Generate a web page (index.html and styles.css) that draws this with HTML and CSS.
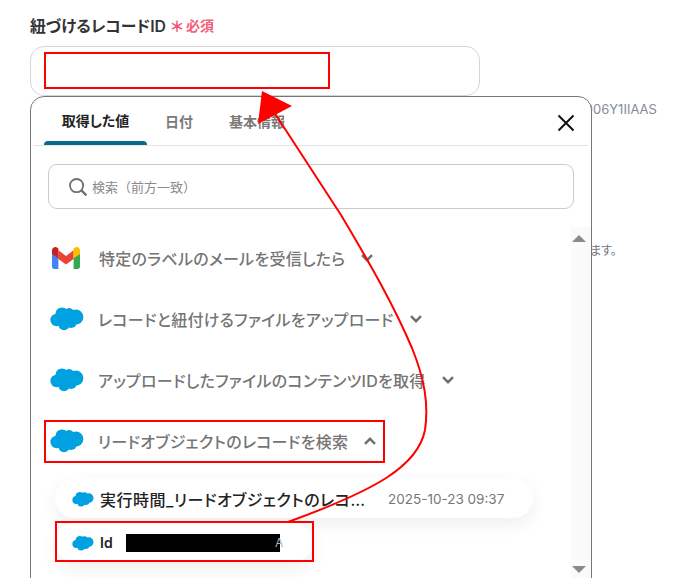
FILE: index.html
```html
<!DOCTYPE html>
<html lang="ja">
<head>
<meta charset="utf-8">
<title>紐づけるレコードID</title>
<link rel="stylesheet" href="styles.css">
</head>
<body>
<svg class="defs" width="0" height="0" aria-hidden="true">
  <symbol id="sf" viewBox="0 0 34 25">
    <g fill="#00a1e0">
      <circle cx="12" cy="8" r="6.6"/>
      <circle cx="19" cy="7.6" r="5.6"/>
      <circle cx="26" cy="11" r="7.4"/>
      <circle cx="6.6" cy="14" r="6.2"/>
      <circle cx="14" cy="18.6" r="5.6"/>
      <circle cx="21" cy="16" r="6"/>
      <rect x="8" y="8" width="18" height="10"/>
    </g>
  </symbol>
  <symbol id="down" viewBox="0 0 14 10">
    <path d="M2 2.2 7 7.2 12 2.2" fill="none" stroke="#6f6f6f" stroke-width="2.4"/>
  </symbol>
  <symbol id="up" viewBox="0 0 14 10">
    <path d="M2 7.8 7 2.8 12 7.8" fill="none" stroke="#6f6f6f" stroke-width="2.4"/>
  </symbol>
</svg>

<main class="form">
  <div class="label-row">
    <span class="label">紐づけるレコードID</span>
    <span class="asterisk">＊</span>
    <span class="required">必須</span>
  </div>
  <div class="input"></div>
  <p class="hint hint-id">0016F00006Y1IIAAS</p>
  <p class="hint hint-note">ます。</p>
</main>

<section class="panel">
  <header class="tabs">
    <span class="tab tab-active">取得した値</span>
    <span class="tab tab-date">日付</span>
    <span class="tab tab-basic">基本情報</span>
    <svg class="close" width="18" height="18" viewBox="0 0 18 18"><path d="M1.5 1.5 16.5 16.5M16.5 1.5 1.5 16.5" stroke="#111" stroke-width="2" fill="none"/></svg>
  </header>
  <div class="search">
    <svg width="20" height="20" viewBox="0 0 20 20"><circle cx="8.6" cy="8.6" r="6.6" fill="none" stroke="#6f6f6f" stroke-width="1.8"/><path d="M13.4 13.4 18.4 18.4" stroke="#6f6f6f" stroke-width="2.2"/></svg>
    <span>検索（前方一致）</span>
  </div>
  <div class="list-wrap">
    <div class="list">
      <div class="row">
        <svg class="icon-gmail" width="28" height="22" viewBox="0 0 28 22">
          <path d="M0 5.5V19.6C0 20.9 1 22 2.2 22H6.4V10.8Z" fill="#4285f4"/>
          <path d="M28 5.5V19.6C28 20.9 27 22 25.8 22H21.6V10.8Z" fill="#34a853"/>
          <path d="M6.4 12V3.2L14 9 21.6 3.2V12L14 17.6Z" fill="#ea4335"/>
          <path d="M0 3.4C0 .6 3.2-1 5.4.7L6.4 1.4V11.6L0 6.9Z" fill="#c5221f"/>
          <path d="M28 3.4C28 .6 24.8-1 22.6.7L21.6 1.4V11.6L28 6.9Z" fill="#fbbc04"/>
        </svg>
        <span class="row-text">特定のラベルのメールを受信したら</span>
        <svg class="chev" width="14" height="10"><use href="#down"/></svg>
      </div>
      <div class="row">
        <svg class="icon-sf" width="34" height="25"><use href="#sf"/></svg>
        <span class="row-text">レコードと紐付けるファイルをアップロード</span>
        <svg class="chev" width="14" height="10"><use href="#down"/></svg>
      </div>
      <div class="row">
        <svg class="icon-sf" width="34" height="25"><use href="#sf"/></svg>
        <span class="row-text">アップロードしたファイルのコンテンツIDを取得</span>
        <svg class="chev" width="14" height="10"><use href="#down"/></svg>
      </div>
      <div class="row">
        <svg class="icon-sf" width="34" height="25"><use href="#sf"/></svg>
        <span class="row-text">リードオブジェクトのレコードを検索</span>
        <svg class="chev" width="14" height="10"><use href="#up"/></svg>
      </div>
      <div class="pills">
        <div class="pill pill-wide">
          <svg width="22" height="16"><use href="#sf"/></svg>
          <span class="pill-name">実行時間_リードオブジェクトのレコード</span>
          <span class="pill-date">2025-10-23 09:37</span>
        </div>
        <div class="pill pill-narrow">
          <svg width="22" height="16"><use href="#sf"/></svg>
          <span class="pill-id">Id</span>
          <span class="redaction"></span>
          <span class="pill-tail">A</span>
        </div>
      </div>
    </div>
    <div class="scrollbar">
      <span class="arrow arrow-up"></span>
      <span class="arrow arrow-down"></span>
    </div>
  </div>
</section>

<div class="mark mark-input"></div>
<div class="mark mark-row"></div>
<div class="mark mark-id"></div>
<svg class="annotation" width="682" height="578" viewBox="0 0 682 578" aria-hidden="true">
  <path d="M274 112 L341 215 C372 267 394 306 412 348 C424 378 429 403 425 430 C418 466 376 490 288 522" fill="none" stroke="#f00" stroke-width="2"/>
  <path d="M262 91 L292 106 L258 124Z" fill="#f00"/>
</svg>
</body>
</html>
```

FILE: styles.css
```css
* { box-sizing: border-box; }

html, body {
  margin: 0;
  height: 578px;
  overflow: hidden;
  background: #fff;
  font-family: Inter, "Noto Sans CJK JP", sans-serif;
  font-feature-settings: "palt";
}

body { position: relative; }

.defs { position: absolute; }

.form { padding: 15px 0 0 30px; }

.label-row {
  display: flex;
  align-items: center;
  height: 20px;
}

.label {
  font-size: 15.8px;
  font-weight: 600;
  color: #333;
}

.asterisk {
  margin-left: 3px;
  width: 16px;
  font-size: 15px;
  font-weight: 600;
  color: #f4516c;
  text-align: center;
}

.required {
  margin-left: 1px;
  font-size: 14px;
  font-weight: 600;
  color: #f4617a;
}

.input {
  width: 450px;
  height: 50px;
  margin-top: 11px;
  border: 1px solid #d2d6dc;
  border-radius: 14px;
}

.hint {
  margin: 0;
  font-size: 13px;
  line-height: 18px;
  color: #858b96;
  white-space: nowrap;
}

.hint-id {
  margin-top: 4px;
  padding-left: 501px;
}

.hint-note {
  margin-top: 124px;
  padding-left: 560px;
  color: #6f757f;
  font-size: 12px;
}

.panel {
  position: absolute;
  left: 30px;
  top: 96px;
  width: 562px;
  height: 500px;
  display: flex;
  flex-direction: column;
  background: #fff;
  border: 1px solid #777;
  border-radius: 14px;
}

.tabs {
  display: flex;
  align-items: center;
  height: 49px;
  margin: 0 3px 0 3px;
  border-bottom: 1px solid #e4e4e4;
}

.tab {
  font-size: 14px;
  font-weight: 600;
  color: #7a7a7a;
  white-space: nowrap;
}

.tab-active {
  position: relative;
  display: flex;
  align-items: center;
  justify-content: center;
  width: 103px;
  height: 48px;
  margin-left: 10px;
  padding-bottom: 2px;
  color: #222;
}

.tab-active::after {
  content: "";
  position: absolute;
  left: 0;
  right: 0;
  bottom: 0;
  height: 4px;
  background: #0b6a85;
  border-radius: 4px 4px 0 0;
}

.tab-date { margin-left: 18px; }
.tab-basic { margin-left: 36px; }

.close {
  margin-left: auto;
  margin-right: 13px;
  margin-top: 3px;
}

.search {
  display: flex;
  align-items: center;
  gap: 4px;
  width: 526px;
  height: 45px;
  margin: 18px 0 0 17px;
  padding-left: 19px;
  border: 1px solid #ccc;
  border-radius: 9px;
  font-size: 13px;
  font-feature-settings: normal;
  color: #8a8a8a;
}

.list-wrap {
  display: flex;
  flex: 1;
  min-height: 0;
  margin-top: 18px;
}

.list {
  flex: 1;
  min-width: 0;
}

.row {
  display: flex;
  align-items: center;
  height: 61px;
  padding-left: 19px;
}

.icon-gmail { margin: 0 19px 0 2px; }
.icon-sf { margin-right: 14px; }

.row-text {
  font-size: 16px;
  letter-spacing: 0.27px;
  font-weight: 500;
  color: #757575;
  white-space: nowrap;
}

.chev { margin-left: 15px; }

.pills {
  display: flex;
  flex-direction: column;
  gap: 5px;
  padding: 8px 0 0 24px;
}

.pill {
  display: flex;
  align-items: center;
  height: 39px;
  padding-left: 17px;
  background: #fff;
  border-radius: 20px;
  box-shadow: 0 6px 18px rgba(0, 0, 0, 0.07);
}

.pill-wide { width: 478px; }
.pill-narrow { width: 258px; }

.pill-name {
  width: 273px;
  margin-left: 6px;
  overflow: hidden;
  white-space: nowrap;
  text-overflow: ellipsis;
  font-size: 16px;
  letter-spacing: 0.5px;
  font-weight: 500;
  color: #222;
}

.pill-date {
  margin-left: 15px;
  font-size: 13.5px;
  color: #777;
  white-space: nowrap;
}

.pill-id {
  margin-left: 6px;
  width: 26px;
  font-size: 14px;
  font-weight: 600;
  color: #222;
}

.redaction {
  width: 154px;
  height: 18px;
  background: #000;
}

.pill-tail {
  margin-left: -5px;
  font-size: 12px;
  color: #b0b0b0;
}

.scrollbar {
  position: relative;
  flex: none;
  width: 20px;
  background: #fafafa;
}

.arrow {
  position: absolute;
  left: 1px;
  width: 0;
  height: 0;
  border-left: 7px solid transparent;
  border-right: 7px solid transparent;
}

.arrow-up { top: 8px; border-bottom: 7px solid #8a8a8a; }
.arrow-down { top: 339px; border-top: 7px solid #8a8a8a; }

.mark {
  position: absolute;
  border: 2px solid #f00;
}

.mark-input { left: 44px; top: 52px; width: 286px; height: 37px; }
.mark-row { left: 44px; top: 420px; width: 341px; height: 43px; }
.mark-id { left: 55px; top: 521px; width: 259px; height: 41px; }

.annotation {
  position: absolute;
  left: 0;
  top: 0;
}
```
